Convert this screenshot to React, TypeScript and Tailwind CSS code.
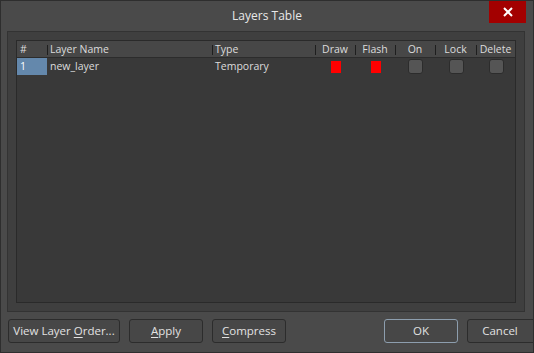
const columns = [
  { key: "num", label: "#", width: "w-[30px]", align: "left" },
  { key: "name", label: "Layer Name", width: "w-[165px]", align: "left" },
  { key: "type", label: "Type", width: "w-[103px]", align: "left" },
  { key: "draw", label: "Draw", width: "w-[40px]", align: "center" },
  { key: "flash", label: "Flash", width: "w-[40px]", align: "center" },
  { key: "on", label: "On", width: "w-[40px]", align: "center" },
  { key: "lock", label: "Lock", width: "w-[41px]", align: "center" },
  { key: "del", label: "Delete", width: "w-[39px]", align: "center" },
];

const Swatch = () => <div className="w-[10px] h-[12px] bg-[#ff0000]" />;

const Check = () => (
  <div className="w-[15px] h-[15px] rounded-[3px] bg-[#555555] border border-[#2c2c2c]" />
);

const DialogButton = ({
  children,
  width,
  primary = false,
}: {
  children: React.ReactNode;
  width: string;
  primary?: boolean;
}) => (
  <button
    type="button"
    className={`${width} h-[24px] shrink-0 rounded-[3px] bg-[#474747] text-[#e2e2e2] text-[11.5px] ${
      primary ? "border border-[#8d9eae]" : "border border-[#2c2c2c]"
    }`}
  >
    {children}
  </button>
);

export default function App() {
  return (
    <div
      className="w-[534px] h-[353px] bg-[#4a4a4a] border border-[#2e2e2e] flex flex-col overflow-hidden text-[#dcdcdc]"
      style={{ fontFamily: '"Open Sans", "Noto Sans", sans-serif' }}
    >
      {/* Title bar */}
      <div className="relative h-[30px] shrink-0 flex items-center justify-center">
        <span className="text-[12px] text-[#e8e8e8] pb-[1px]">Layers Table</span>
        <button
          type="button"
          className="absolute top-[-1px] right-[7px] w-[37px] h-[23px] bg-[#a30000] flex items-center justify-center"
        >
          <svg width="10" height="10" viewBox="0 0 10 10">
            <path d="M1 1 L9 9 M9 1 L1 9" stroke="#ffffff" strokeWidth="2" />
          </svg>
        </button>
      </div>

      {/* Panel */}
      <div className="ml-[6px] w-[518px] h-[281px] shrink-0 bg-[#3f3f3f] border border-[#333333] pt-[8px] pl-[8px]">
        <div className="w-[500px] h-[263px] bg-[#393939] border border-[#2a2a2a]">
          {/* Header */}
          <div className="flex h-[17px] bg-[#474747] border-b border-[#2c2c2c] text-[10.5px]">
            {columns.map((c, i) => (
              <div
                key={c.key}
                className={`${c.width} relative flex items-center ${
                  c.align === "center" ? "justify-center" : "pl-[3px]"
                }`}
              >
                {i > 0 && (
                  <div className="absolute left-0 top-[4px] h-[10px] w-px bg-[#1e1e1e]" />
                )}
                <span className="leading-none">{c.label}</span>
              </div>
            ))}
          </div>
          {/* Row */}
          <div className="flex h-[17px] text-[10.5px]">
            <div className="w-[30px] bg-[#6488ac] text-white pl-[3px] flex items-center">1</div>
            <div className="w-[165px] pl-[3px] flex items-center">new_layer</div>
            <div className="w-[103px] pl-[3px] flex items-center">Temporary</div>
            <div className="w-[40px] flex items-center justify-center pl-[2px]">
              <Swatch />
            </div>
            <div className="w-[40px] flex items-center justify-center pl-[2px]">
              <Swatch />
            </div>
            <div className="w-[40px] flex items-center justify-center pl-[1px]">
              <Check />
            </div>
            <div className="w-[41px] flex items-center justify-center pl-[1px]">
              <Check />
            </div>
            <div className="w-[39px] flex items-center justify-center pl-[2px]">
              <Check />
            </div>
          </div>
        </div>
      </div>

      {/* Buttons */}
      <div className="flex mt-[7px] pl-[7px]">
        <DialogButton width="w-[112px]">
          View Layer <span className="underline underline-offset-2">O</span>rder...
        </DialogButton>
        <div className="w-[9px] shrink-0" />
        <DialogButton width="w-[74px]">
          <span className="underline underline-offset-2">A</span>pply
        </DialogButton>
        <div className="w-[9px] shrink-0" />
        <DialogButton width="w-[74px]">
          <span className="underline underline-offset-2">C</span>ompress
        </DialogButton>
        <div className="w-[98px] shrink-0" />
        <DialogButton width="w-[74px]" primary>
          OK
        </DialogButton>
        <div className="w-[9px] shrink-0" />
        <DialogButton width="w-[74px]">
          <span className="pr-[8px]">Cancel</span>
        </DialogButton>
      </div>
    </div>
  );
}
